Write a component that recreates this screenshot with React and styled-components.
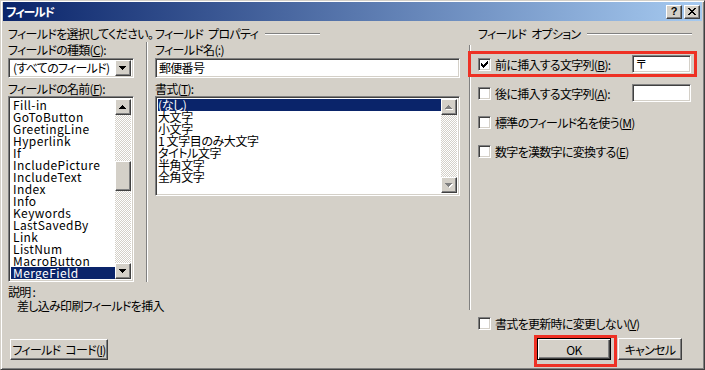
import React from 'react';
import styled, { createGlobalStyle, css } from 'styled-components';

const face = '#d4d0c8';

const GlobalStyle = createGlobalStyle`
  html, body { margin: 0; padding: 0; background: ${face}; }
  body {
    font-family: "Noto Sans CJK JP", "MS UI Gothic", sans-serif;
    font-size: 12px;
    color: #000;
    font-feature-settings: "palt";
    letter-spacing: -0.7px;
  }
  * { box-sizing: border-box; }
  u { text-underline-offset: 1px; }
`;

const raised = css`
  border: 1px solid;
  border-color: #fff #404040 #404040 #fff;
  box-shadow: inset -1px -1px #808080;
  background: ${face};
`;

const sunken = css`
  border: 1px solid;
  border-color: #808080 #fff #fff #808080;
  box-shadow: inset 1px 1px #404040, inset -1px -1px ${face};
`;

const dither = css`
  background: repeating-conic-gradient(${face} 0 25%, #fff 0 50%) 0 0 / 2px 2px;
`;

const Window = styled.div`
  width: 705px;
  height: 370px;
  background: ${face};
  border: 1px solid;
  border-color: ${face} #404040 #404040 ${face};
  box-shadow: inset 1px 1px #fff, inset -1px -1px #808080;
  padding: 1px 2px 2px 2px;
  display: flex;
  flex-direction: column;
`;

const TitleBar = styled.div`
  height: 19px;
  display: flex;
  align-items: center;
  justify-content: space-between;
  padding: 0 2px 0 3px;
  background: linear-gradient(to right, #0a246a, #a6caf0);
`;

const Title = styled.span`
  color: #fff;
  font-weight: bold;
  font-size: 12px;
  letter-spacing: -1.2px;
`;

const CaptionButtons = styled.div`
  display: flex;
  gap: 2px;
`;

const CaptionButton = styled.div`
  width: 16px;
  height: 14px;
  ${raised};
  display: flex;
  align-items: center;
  justify-content: center;
  font: bold 11px "Liberation Sans", sans-serif;
  letter-spacing: 0;
  line-height: 1;
`;

const Body = styled.div`
  flex: 1;
  display: flex;
  padding: 7px 10px 0 5px;
`;

const LeftArea = styled.div`
  width: 452px;
  display: flex;
  flex-direction: column;
`;

const TopRow = styled.div`
  height: 254px;
  display: flex;
`;

const Column = styled.div`
  width: ${p => p.$w}px;
  margin-left: ${p => p.$ml || 0}px;
  display: flex;
  flex-direction: column;
`;

const Label = styled.div`
  height: 12px;
  line-height: 12px;
  white-space: nowrap;
  margin-top: ${p => p.$mt || 0}px;
`;

const Gap = styled.span`
  display: inline-block;
  width: ${p => p.$w}px;
`;

const VSep = styled.div`
  width: 2px;
  border-left: 1px solid #808080;
  border-right: 1px solid #fff;
  margin-left: ${p => p.$ml}px;
  margin-top: ${p => p.$mt || 0}px;
`;

const Group = styled.div`
  display: flex;
  align-items: center;
  height: 12px;
  line-height: 12px;
  white-space: nowrap;
  margin-left: ${p => p.$ml || 0}px;
`;

const HLine = styled.div`
  height: 2px;
  border-top: 1px solid #808080;
  border-bottom: 1px solid #fff;
  margin-left: 7px;
  ${p => (p.$w ? `width: ${p.$w}px;` : 'flex: 1;')}
`;

const Combo = styled.div`
  ${sunken};
  background: #fff;
  height: 20px;
  margin-top: ${p => p.$mt}px;
  display: flex;
  align-items: center;
  padding: 2px;
`;

const ComboText = styled.div`
  flex: 1;
  padding-left: 2px;
  line-height: 14px;
  white-space: nowrap;
`;

const ArrowButton = styled.div`
  width: 16px;
  height: ${p => p.$h || 16}px;
  flex: none;
  ${raised};
  display: flex;
  align-items: center;
  justify-content: center;
`;

const TextBox = styled.div`
  ${sunken};
  background: #fff;
  height: ${p => p.$h || 20}px;
  width: ${p => (p.$w ? `${p.$w}px` : 'auto')};
  margin-top: ${p => p.$mt || 0}px;
  padding: 1px 3px;
  line-height: ${p => (p.$h || 20) - 4}px;
  white-space: nowrap;
  flex: none;
`;

const ListBox = styled.div`
  ${sunken};
  background: #fff;
  height: ${p => p.$h}px;
  margin-top: ${p => p.$mt || 0}px;
  display: flex;
  padding: 2px;
`;

const Items = styled.div`
  flex: 1;
  overflow: hidden;
  letter-spacing: ${p => p.$ls || 0}px;
`;

const Item = styled.div`
  height: 12px;
  line-height: 12px;
  padding-left: ${p => p.$pl}px;
  white-space: nowrap;
  background: ${p => (p.$sel ? '#0a246a' : 'transparent')};
  color: ${p => (p.$sel ? '#fff' : '#000')};
`;

const ScrollBar = styled.div`
  width: 16px;
  display: flex;
  flex-direction: column;
  ${dither};
`;

const Track = styled.div`
  flex: ${p => (p.$h ? 'none' : 1)};
  height: ${p => (p.$h ? `${p.$h}px` : 'auto')};
`;

const Thumb = styled.div`
  height: 30px;
  ${raised};
`;

const Description = styled.div`
  margin-top: 3px;
  line-height: 14px;
`;

const Indent = styled.div`
  padding-left: 9px;
`;

const Button = styled.div`
  width: ${p => p.$w}px;
  height: ${p => p.$h || 21}px;
  ${raised};
  display: flex;
  align-items: center;
  justify-content: center;
  white-space: nowrap;
  margin-top: ${p => p.$mt || 0}px;
  margin-left: ${p => p.$ml || 0}px;
  ${p =>
    p.$default &&
    css`
      border: 1px solid #000;
      box-shadow: inset 1px 1px #fff, inset -1px -1px #404040, inset -2px -2px #808080;
    `}
  ${p =>
    p.$marked &&
    css`
      position: relative;
      &::after {
        content: '';
        position: absolute;
        left: -4px;
        top: -4px;
        right: -7px;
        bottom: -8px;
        border: 3px solid #ee3124;
      }
    `}
`;

const RightArea = styled.div`
  flex: 1;
  display: flex;
  flex-direction: column;
`;

const OptionFrame = styled.div`
  margin-top: 5px;
  height: 265px;
  display: flex;
`;

const Options = styled.div`
  flex: 1;
  margin-left: 7px;
  padding-top: 9px;
  display: flex;
  flex-direction: column;
  gap: 9px;
`;

const OptionRow = styled.div`
  height: ${p => p.$h || 20}px;
  display: flex;
  align-items: center;
  white-space: nowrap;
  margin-top: ${p => p.$mt || 0}px;
  margin-left: ${p => p.$ml || 0}px;
  ${p =>
    p.$marked &&
    css`
      position: relative;
      &::after {
        content: '';
        position: absolute;
        left: -10px;
        right: -5px;
        top: -3px;
        bottom: -3px;
        border: 3px solid #ee3124;
      }
    `}
`;

const Box = styled.div`
  width: 13px;
  height: 13px;
  flex: none;
  ${sunken};
  background: #fff;
  display: flex;
  align-items: center;
  justify-content: center;
  margin-right: 4px;
`;

const OptionText = styled.span`
  line-height: 13px;
`;

const ButtonRow = styled.div`
  margin-top: 8px;
  display: flex;
  justify-content: flex-end;
  gap: 7px;
  padding-right: 10px;
`;

const Arrow = ({ down, disabled }) => {
  const rows = [[3, 1], [2, 3], [1, 5], [0, 7]];
  const rects = (fill, dx) =>
    rows.map(([x, w], i) => (
      <rect key={`${fill}${i}`} x={x + dx} y={(down ? 3 - i : i) + dx} width={w} height={1} fill={fill} />
    ));
  return (
    <svg width="8" height="5" shapeRendering="crispEdges">
      {disabled && rects('#fff', 1)}
      {rects(disabled ? '#808080' : '#000', 0)}
    </svg>
  );
};

const Check = () => {
  const px = [
    [6, 0], [5, 1], [6, 1], [0, 2], [4, 2], [5, 2], [6, 2],
    [0, 3], [1, 3], [3, 3], [4, 3], [5, 3], [0, 4], [1, 4], [2, 4], [3, 4], [4, 4],
    [1, 5], [2, 5], [3, 5], [2, 6],
  ];
  return (
    <svg width="7" height="7" shapeRendering="crispEdges">
      {px.map(([x, y]) => (
        <rect key={`${x}-${y}`} x={x} y={y} width={1} height={1} fill="#000" />
      ))}
    </svg>
  );
};

const CloseGlyph = () => (
  <svg width="8" height="7" shapeRendering="crispEdges">
    {[0, 1, 2, 3, 4, 5, 6].map(i => (
      <g key={i}>
        <rect x={i} y={i} width={2} height={1} fill="#000" />
        <rect x={6 - i} y={i} width={2} height={1} fill="#000" />
      </g>
    ))}
  </svg>
);

const CheckBox = ({ checked }) => <Box>{checked && <Check />}</Box>;

const fieldNames = [
  'Fill-in', 'GoToButton', 'GreetingLine', 'Hyperlink', 'If', 'IncludePicture',
  'IncludeText', 'Index', 'Info', 'Keywords', 'LastSavedBy', 'Link', 'ListNum',
  'MacroButton', 'MergeField',
];

const formats = ['(なし)', '大文字', '小文字', '1 文字目のみ大文字', 'タイトル文字', '半角文字', '全角文字'];

export default function App() {
  return (
    <>
      <GlobalStyle />
      <Window>
        <TitleBar>
          <Title>フィールド</Title>
          <CaptionButtons>
            <CaptionButton>?</CaptionButton>
            <CaptionButton>
              <CloseGlyph />
            </CaptionButton>
          </CaptionButtons>
        </TitleBar>
        <Body>
          <LeftArea>
            <TopRow>
              <Column $w={126}>
                <Label>フィールドを選択してください。</Label>
                <Label $mt={4}>
                  フィールドの種類(<u>C</u>):
                </Label>
                <Combo $mt={2}>
                  <ComboText>(すべてのフィールド)</ComboText>
                  <ArrowButton>
                    <Arrow down />
                  </ArrowButton>
                </Combo>
                <Label $mt={5}>
                  フィールドの名前(<u>F</u>):
                </Label>
                <ListBox $h={186} $mt={1}>
                  <Items $ls={0.4}>
                    {fieldNames.map(n => (
                      <Item key={n} $pl={2} $sel={n === 'MergeField'}>
                        {n}
                      </Item>
                    ))}
                  </Items>
                  <ScrollBar>
                    <ArrowButton>
                      <Arrow />
                    </ArrowButton>
                    <Track $h={46} />
                    <Thumb />
                    <Track />
                    <ArrowButton>
                      <Arrow down />
                    </ArrowButton>
                  </ScrollBar>
                </ListBox>
              </Column>
              <VSep $ml={12} $mt={14} />
              <Column $w={305} $ml={7}>
                <Group>
                  フィールド<Gap $w={5} />プロパティ
                  <HLine $w={55} />
                </Group>
                <Label $mt={4}>フィールド名(:)</Label>
                <TextBox $mt={2}>郵便番号</TextBox>
                <Label $mt={5}>
                  書式(<u>T</u>):
                </Label>
                <ListBox $h={100} $mt={1}>
                  <Items $ls={-0.4}>
                    {formats.map(f => (
                      <Item key={f} $pl={0} $sel={f === '(なし)'}>
                        {f}
                      </Item>
                    ))}
                  </Items>
                  <ScrollBar>
                    <ArrowButton>
                      <Arrow disabled />
                    </ArrowButton>
                    <Track />
                    <ArrowButton>
                      <Arrow down disabled />
                    </ArrowButton>
                  </ScrollBar>
                </ListBox>
              </Column>
            </TopRow>
            <Description>
              <div>説明 :</div>
              <Indent>差し込み印刷フィールドを挿入</Indent>
            </Description>
            <Button $w={98} $mt={26} $ml={2}>
              フィールド<Gap $w={5} />コード(<u>I</u>)
            </Button>
          </LeftArea>
          <RightArea>
            <Group $ml={18}>
              フィールド<Gap $w={5} />オプション
              <HLine />
            </Group>
            <OptionFrame>
              <VSep $ml={9} />
              <Options>
                <OptionRow $marked>
                  <CheckBox checked />
                  <OptionText>
                    前に挿入する文字列(<u>B</u>):
                  </OptionText>
                  <TextBox $w={59} $h={18} style={{ marginLeft: 'auto', marginRight: 1 }}>
                    〒
                  </TextBox>
                </OptionRow>
                <OptionRow>
                  <CheckBox />
                  <OptionText>
                    後に挿入する文字列(<u>A</u>):
                  </OptionText>
                  <TextBox $w={59} $h={18} style={{ marginLeft: 'auto', marginRight: 1 }} />
                </OptionRow>
                <OptionRow>
                  <CheckBox />
                  <OptionText>
                    標準のフィールド名を使う(<u>M</u>)
                  </OptionText>
                </OptionRow>
                <OptionRow>
                  <CheckBox />
                  <OptionText>
                    数字を漢数字に変換する(<u>E</u>)
                  </OptionText>
                </OptionRow>
              </Options>
            </OptionFrame>
            <OptionRow $h={13} $mt={7} $ml={18}>
              <CheckBox />
              <OptionText>
                書式を更新時に変更しない(<u>V</u>)
              </OptionText>
            </OptionRow>
            <ButtonRow>
              <Button $w={74} $h={22} $default $marked>
                OK
              </Button>
              <Button $w={64} $h={22}>
                キャンセル
              </Button>
            </ButtonRow>
          </RightArea>
        </Body>
      </Window>
    </>
  );
}
